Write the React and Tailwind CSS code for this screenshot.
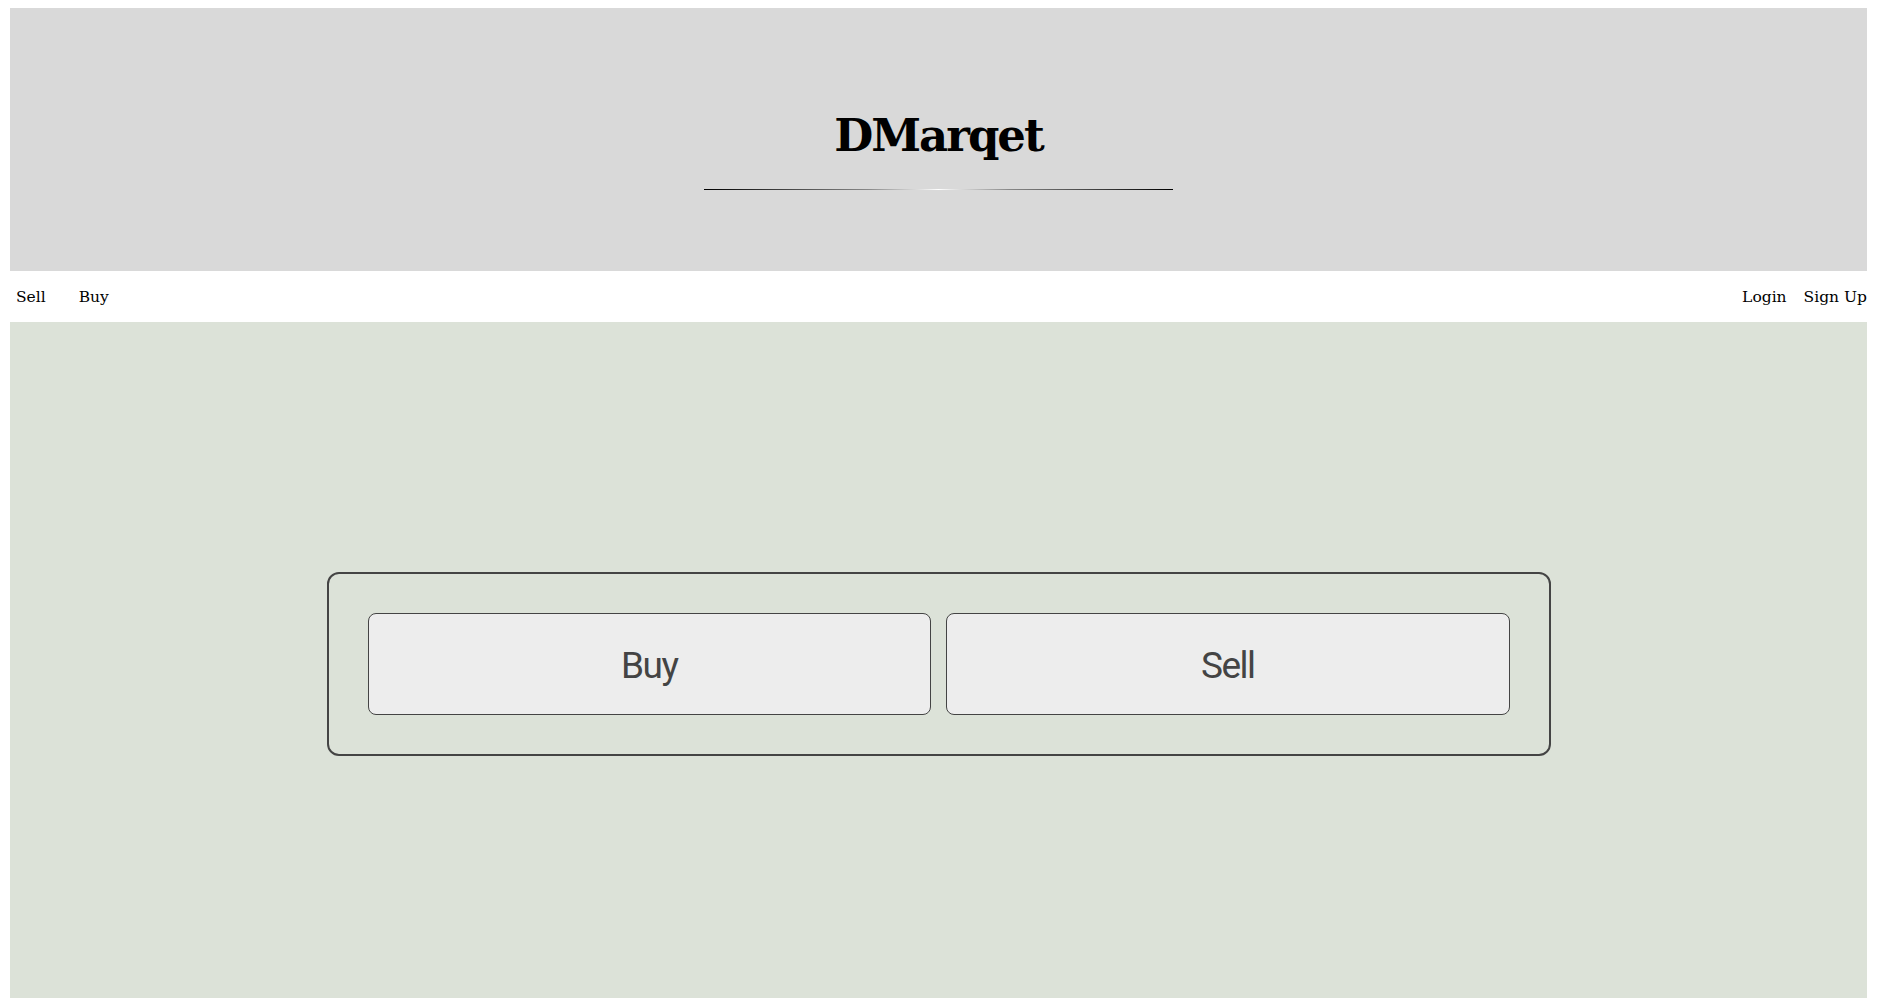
import React from "react";

export default function App() {
  const serif = { fontFamily: '"DejaVu Serif", "Liberation Serif", serif' };
  return (
    <div className="min-h-screen bg-white pt-[8px] px-[10px] pb-[10px] flex flex-col">
      <header className="h-[263px] bg-[#d9d9d9] flex flex-col items-center pt-[100px]">
        <h1
          className="text-[45px] font-bold leading-[56px] text-black tracking-[-2px]"
          style={serif}
        >
          DMarqet
        </h1>
        <div className="mt-[25px] w-[469px] h-px bg-[linear-gradient(to_right,#000_0%,#888_35%,#fff_50%,#888_65%,#000_100%)]" />
      </header>
      <nav
        className="h-[51px] flex items-center justify-between text-[15.5px] text-black pt-[2px]"
        style={serif}
      >
        <div className="flex items-center gap-[33px] pl-[6px]">
          <a>Sell</a>
          <a>Buy</a>
        </div>
        <div className="flex items-center gap-[17px]">
          <a>Login</a>
          <a>Sign Up</a>
        </div>
      </nav>
      <main className="flex-1 bg-[#dce2d8] flex justify-center items-start pt-[250px]">
        <div className="w-[1224px] h-[184px] border-2 border-[#444] rounded-[12px] p-[39px] flex gap-[15px]">
          {["Buy", "Sell"].map((t) => (
            <button
              key={t}
              className="flex-1 h-[102px] bg-[#ededed] border border-[#444] rounded-[8px] flex items-center justify-center pt-[3px] text-[37px] text-[#444] tracking-[-1.5px]"
              style={{ fontFamily: 'Roboto, "Noto Sans", sans-serif' }}
            >
              {t}
            </button>
          ))}
        </div>
      </main>
    </div>
  );
}
